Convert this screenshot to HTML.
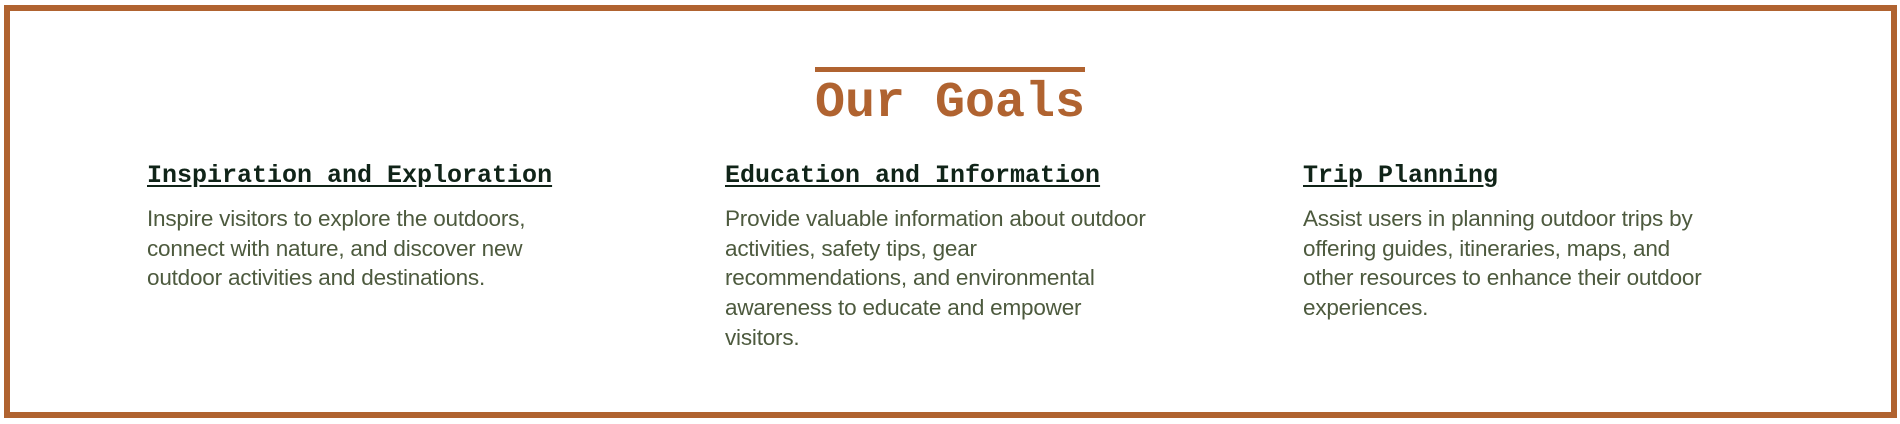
<!DOCTYPE html>
<html><head><meta charset="utf-8"><style>
html,body{margin:0;padding:0;background:#fff;width:1900px;height:424px;overflow:hidden}
.box{position:absolute;left:4px;top:5px;width:1881px;height:401px;border:6px solid #b06330;background:#fff}
.line{position:absolute;left:815px;top:67px;width:270px;height:5px;background:#b06330}
.title{position:absolute;left:815px;top:76px;font-family:"Liberation Mono",monospace;font-weight:bold;font-size:50px;line-height:56px;color:#b06330;white-space:nowrap}
.col{position:absolute;top:162px;width:480px}
h3{margin:0;font-family:"Liberation Mono",monospace;font-weight:bold;font-size:25px;line-height:28px;color:#102418;text-decoration:underline;text-underline-offset:3px;white-space:nowrap}
p{margin:14px 0 0;font-family:"Liberation Sans",sans-serif;font-size:22.5px;line-height:29.7px;color:#4d5a3e;white-space:nowrap;letter-spacing:-0.2px}
</style></head><body>
<div class="box"></div>
<div class="line"></div>
<div class="title">Our Goals</div>
<div class="col" style="left:147px"><h3>Inspiration and Exploration</h3><p>Inspire visitors to explore the outdoors,<br>connect with nature, and discover new<br>outdoor activities and destinations.</p></div>
<div class="col" style="left:725px"><h3>Education and Information</h3><p>Provide valuable information about outdoor<br>activities, safety tips, gear<br>recommendations, and environmental<br>awareness to educate and empower<br>visitors.</p></div>
<div class="col" style="left:1303px"><h3>Trip Planning</h3><p>Assist users in planning outdoor trips by<br>offering guides, itineraries, maps, and<br>other resources to enhance their outdoor<br>experiences.</p></div>
</body></html>
